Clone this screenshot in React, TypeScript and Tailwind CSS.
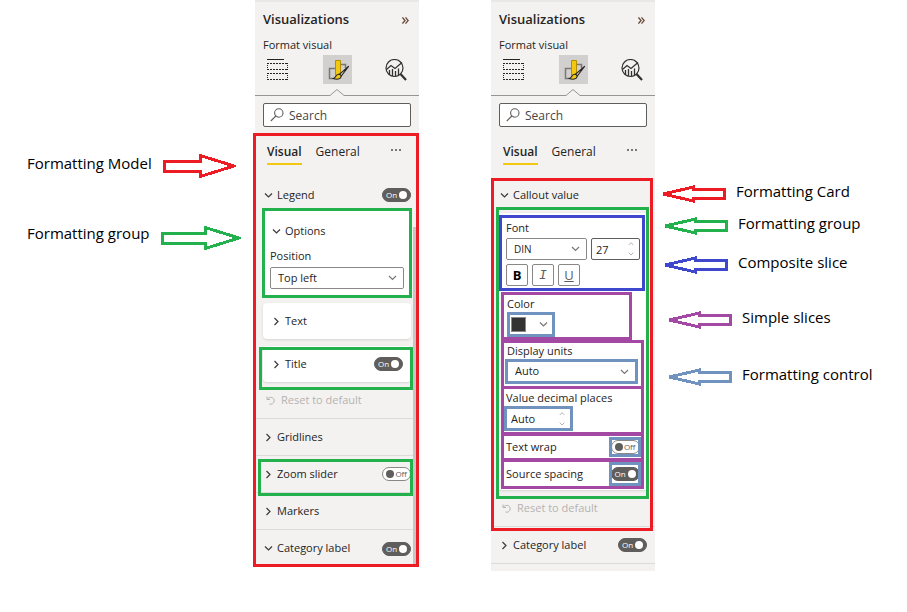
import React, { useId, useState } from "react";
import type { ReactNode } from "react";

type Dir = "down" | "right" | "up";

function Chevron({ dir = "down", size = "size-[9px]", className = "" }: { dir?: Dir; size?: string; className?: string }) {
  const d = { down: "M1 2.5 4.5 6 8 2.5", right: "M2.5 1 6 4.5 2.5 8", up: "M1 6 4.5 2.5 8 6" }[dir];
  return (
    <svg viewBox="0 0 9 9" fill="none" stroke="currentColor" className={`shrink-0 ${size} ${className}`} aria-hidden="true">
      <path d={d} strokeWidth="1.2" />
    </svg>
  );
}

function Frame({ className }: { className: string }) {
  return <div aria-hidden="true" className={`pointer-events-none absolute border-[3px] ${className}`} />;
}

function Toggle({ label, initial }: { label: string; initial: boolean }) {
  const [on, setOn] = useState(initial);
  return (
    <label className="relative block h-[14px] w-[29px] shrink-0">
      <input
        type="checkbox"
        role="switch"
        aria-label={label}
        checked={on}
        onChange={() => setOn(!on)}
        className="block h-full w-full appearance-none rounded-full border border-[#8a8886] bg-white checked:border-[#605e5c] checked:bg-[#605e5c]"
      />
      <span
        className={`pointer-events-none absolute inset-0 flex items-center justify-between px-1 text-[8px] leading-none ${
          on ? "text-white" : "flex-row-reverse text-[#605e5c]"
        }`}
      >
        {on ? "On" : "Off"}
        <span className={`size-2 rounded-full ${on ? "bg-white" : "bg-[#605e5c]"}`} />
      </span>
    </label>
  );
}

function Select({ id, value, className = "", text = "text-[11px]" }: { id: string; value: string; className?: string; text?: string }) {
  return (
    <div className={`relative ${className}`}>
      <select id={id} defaultValue={value} className={`block h-full w-full appearance-none rounded-[inherit] bg-white pr-5 pl-[7px] text-[#252423] ${text}`}>
        <option>{value}</option>
      </select>
      <Chevron className="pointer-events-none absolute top-1/2 right-[6px] -translate-y-1/2 text-[#797775]" />
    </div>
  );
}

function NumberBox({ id, label, value, className }: { id: string; label?: string; value: string; className: string }) {
  return (
    <div className={`flex items-center bg-white ${className}`}>
      <input id={id} aria-label={label} defaultValue={value} className="h-full w-0 flex-1 bg-transparent pl-1 text-[11px] text-[#252423]" />
      <span className="flex flex-col gap-1 pr-[5px] text-[#a19f9d]">
        <Chevron dir="up" size="size-[6px]" />
        <Chevron size="size-[6px]" />
      </span>
    </div>
  );
}

function BuildIcon() {
  return (
    <svg viewBox="0 0 22 22" className="size-[22px]" fill="none" stroke="#252423" shapeRendering="crispEdges" aria-hidden="true">
      <path d="M0 .5H17" />
      <path d="M0 4.5H21M0 10.5H21M0 14.5H21M0 20.5H21" strokeDasharray="2 1" />
      <path d="M.5 4V11M20.500 4V11M.5 14V21M20.500 14V21" strokeDasharray="1 1" />
    </svg>
  );
}

function FormatIcon() {
  return (
    <svg viewBox="0 0 29 29" className="size-[29px]" fill="none" aria-hidden="true">
      <path d="M12 13.500H6.500V23.500H12M18 9.500h4.500V13" stroke="#797775" strokeWidth="1.500" />
      <path d="M12.500 5.500h5V20.500h-5z" fill="#f2c811" stroke="#b58e00" />
      <path d="M25.500 11.500 18.300 21l-2-1.600z" fill="#e1dfdd" stroke="#252423" strokeWidth="1.200" strokeLinejoin="round" />
      <path d="M15.500 19.300c1.700-.2 2.900 1 2.500 2.500-.7 2.400-4.200 3-7.500 1.700 2.300-.4 2-3.900 5-4.200z" fill="#f2c811" stroke="#252423" strokeWidth="1.100" />
    </svg>
  );
}

function AnalyticsIcon() {
  return (
    <svg viewBox="0 0 22 22" className="size-[22px]" fill="none" stroke="#323130" aria-hidden="true">
      <circle cx="9.500" cy="9" r="8.500" strokeWidth="1.200" />
      <path d="m1.500 10.500 4.500-4 4 3 7-6" strokeWidth="1.200" />
      <path d="M4.500 11v4.500M7.500 10v7M10.500 12v5.500M13.500 9.500V16" strokeWidth="1.300" />
      <path d="m15.500 15 5.500 6" strokeWidth="2.200" />
    </svg>
  );
}

function PanelHeader() {
  return (
    <header>
      <div className="flex h-9 items-center justify-between pr-[10px] pl-2">
        <h2 className="text-[13px] font-semibold">Visualizations</h2>
        <button type="button" aria-label="Collapse pane" className="text-[#6b4a3a]">
          <svg viewBox="0 0 8 8" className="size-[7px]" fill="none" stroke="currentColor" strokeWidth="1.500" aria-hidden="true">
            <path d="m.5.500 3 3.500-3 3.500M4 .500l3 3.500-3 3.500" />
          </svg>
        </button>
      </div>
      <p className="pl-2 text-[11px] leading-[14px]">Format visual</p>
      <div className="mt-[3px] flex items-center justify-between px-3">
        <button type="button" aria-label="Build visual"><BuildIcon /></button>
        <button type="button" aria-label="Format visual" className="bg-[#d2d0ce]"><FormatIcon /></button>
        <button type="button" aria-label="Analytics"><AnalyticsIcon /></button>
      </div>
      <div className="mt-[5px] flex items-end">
        <span className="h-px flex-1 bg-[#979593]" />
        <svg viewBox="0 0 14 7" className="h-[7px] w-[14px]" fill="none" stroke="#979593" aria-hidden="true">
          <path d="M0 6.500 7 .500l7 6" />
        </svg>
        <span className="h-px flex-1 bg-[#979593]" />
      </div>
      <label className="mx-2 mt-[7px] flex h-6 items-center gap-[5px] rounded-[2px] border border-[#605e5c] bg-white pl-[6px]">
        <svg viewBox="0 0 14 14" className="size-[14px] shrink-0" fill="none" stroke="#605e5c" strokeWidth="1.100" aria-hidden="true">
          <circle cx="8.800" cy="5" r="4.200" />
          <path d="M5.800 8 .8 13" />
        </svg>
        <input type="text" aria-label="Search" placeholder="Search" className="h-full w-full min-w-0 bg-transparent pt-px text-[12px] placeholder:text-[#484644]" />
      </label>
    </header>
  );
}

function Tabs() {
  return (
    <div role="tablist" className="flex h-6 pr-[18px] pl-3 text-[12px]">
      <button type="button" role="tab" aria-selected="true" className="border-b-2 border-[#f2c811] font-semibold">Visual</button>
      <button type="button" role="tab" aria-selected="false" className="ml-[14px] border-b-2 border-transparent">General</button>
      <button type="button" aria-label="More options" className="ml-auto pb-[6px]">
        <svg viewBox="0 0 10 2" className="h-[2px] w-[10px]" fill="#797775" aria-hidden="true">
          <path d="M0 0h2v2H0zM4 0h2v2H4zM8 0h2v2H8z" />
        </svg>
      </button>
    </div>
  );
}

function CardRow({ title, open = false, toggle, className = "", children }: { title: string; open?: boolean; toggle?: boolean; className?: string; children?: ReactNode }) {
  return (
    <div className={`relative flex items-center justify-between pr-2 pl-[9px] ${className}`}>
      <button type="button" aria-expanded={open} className="flex items-center gap-1">
        <Chevron dir={open ? "down" : "right"} className="text-[#3b3a39]" />
        {title}
      </button>
      {toggle !== undefined && <Toggle label={title} initial={toggle} />}
      {children}
    </div>
  );
}

function Reset() {
  return (
    <div className="h-[37px] border-b border-[#dddbd9] pl-[11px]">
      <button type="button" className="flex h-full items-center gap-[6px] text-[#b5b3b1]">
        <svg viewBox="0 0 9 9" className="size-[9px]" fill="none" stroke="currentColor" aria-hidden="true">
          <path d="M1 .500V3.500H4M1.200 3.300C4-.2 8.500 1.500 8.200 5 8 7.500 5.500 8.800 3.500 8" />
        </svg>
        Reset to default
      </button>
    </div>
  );
}

const divided = "h-[37px] border-b border-[#dddbd9]";
const panel = "border-t-2 border-[#e9e8e7] bg-[#f3f2f1] text-[11px] text-[#252423]";

function LegendPanel() {
  const position = useId();
  return (
    <section className={panel}>
      <PanelHeader />
      <div className="relative mt-[6px] pt-2">
        <Tabs />
        <CardRow title="Legend" open toggle={true} className="mt-[17px] h-[26px]" />
        <div className="relative mx-2 bg-white px-[7px] pt-[14px] pb-[9px]">
          <button type="button" aria-expanded="true" className="flex h-[18px] items-center gap-1 pl-[2px]">
            <Chevron className="text-[#3b3a39]" />
            Options
          </button>
          <label htmlFor={position} className="mt-2 block leading-4">Position</label>
          <Select id={position} value="Top left" className="mt-[3px] h-[22px] rounded-[2px] border border-[#8a8886]" />
          <Frame className="inset-y-0 -inset-x-px border-[#22b14c]" />
        </div>
        <CardRow title="Text" className="mx-2 mt-[5px] h-9 rounded-sm bg-white shadow-sm" />
        <CardRow title="Title" toggle={true} className="mx-2 mt-[7px] h-9 rounded-sm bg-white shadow-sm">
          <Frame className="top-px -right-[2px] -bottom-2 -left-1 border-[#22b14c]" />
        </CardRow>
        <Reset />
        <CardRow title="Gridlines" className={divided} />
        <CardRow title="Zoom slider" toggle={false} className={divided}>
          <Frame className="top-[3px] right-[6px] -bottom-1 left-[3px] border-[#22b14c]" />
        </CardRow>
        <CardRow title="Markers" className={divided} />
        <CardRow title="Category label" open toggle={true} className="h-[37px]" />
        <div aria-hidden="true" className="absolute top-[94px] right-[3px] bottom-[3px] w-[3px] bg-[#c8c6c4]" />
        <Frame className="inset-y-0 right-0 -left-[2px] border-[#ed1c24]" />
      </div>
    </section>
  );
}

const slice = "ml-[2px] w-[143px] border-[3px] border-[#a349a4]";
const control = "border-[3px] border-[#7092be]";
const styleButton = "flex size-[22px] items-center justify-center rounded-[2px] border border-[#8a8886] text-[13px] leading-none";

function CalloutPanel() {
  const id = useId();
  return (
    <section className={`${panel} pb-[7px]`}>
      <PanelHeader />
      <div className="mt-[14px]"><Tabs /></div>
      <div className="relative mt-[13px] pt-1">
        <CardRow title="Callout value" open className="h-[26px]" />
        <div className="relative mx-2 mt-[5px] bg-white pt-[2px] pb-px shadow-sm">
          <div className="mr-[2px] border-[3px] border-[#3f48cc] pt-[2px] pr-[2px] pb-[2px] pl-1">
            <label htmlFor={`${id}font`} className="block leading-4">Font</label>
            <div className="mt-[2px] flex h-[22px] gap-1">
              <Select id={`${id}font`} value="DIN" text="text-[10px]" className="flex-1 rounded-[2px] border border-[#8a8886]" />
              <NumberBox id={`${id}size`} label="Font size" value="27" className="w-[49px] rounded-[2px] border border-[#605e5c]" />
            </div>
            <div className="mt-1 flex gap-1">
              <button type="button" aria-label="Bold" className={`${styleButton} font-bold text-black`}>B</button>
              <button type="button" aria-label="Italic" className={`${styleButton} font-['Liberation_Mono',monospace] text-[#605e5c] italic`}>I</button>
              <button type="button" aria-label="Underline" className={`${styleButton} text-[#605e5c] underline`}>U</button>
            </div>
          </div>
          <div className="mt-px ml-[2px] w-[131px] border-[3px] border-[#a349a4] pt-px pl-[3px]">
            <span className="block leading-4">Color</span>
            <button type="button" aria-label="Color" className={`${control} flex h-[25px] w-12 items-center justify-between bg-white pr-1 pl-px`}>
              <span className="size-[15px] border border-[#8a8886] bg-[#333333]" />
              <Chevron className="text-[#797775]" />
            </button>
          </div>
          <div className={`${slice} pr-[3px] pb-[2px] pl-px`}>
            <label htmlFor={`${id}units`} className="block pl-[2px] leading-4">Display units</label>
            <Select id={`${id}units`} value="Auto" className={`${control} h-[25px]`} />
          </div>
          <div className={`${slice} -mt-[3px] py-px`}>
            <label htmlFor={`${id}places`} className="block pl-[2px] leading-4">Value decimal places</label>
            <NumberBox id={`${id}places`} value="Auto" className={`${control} h-[25px] w-[69px]`} />
          </div>
          <div className={`${slice} -mt-[2px] flex h-7 items-center justify-between pl-[2px]`}>
            Text wrap
            <div className={`${control} flex h-5 w-8 items-center justify-center overflow-hidden`}>
              <Toggle label="Text wrap" initial={false} />
            </div>
          </div>
          <div className={`${slice} -mt-[2px] flex h-[30px] items-center justify-between pl-[2px]`}>
            Source spacing
            <div className={`${control} flex h-6 w-8 items-center justify-center overflow-hidden`}>
              <Toggle label="Source spacing" initial={true} />
            </div>
          </div>
          <Frame className="-top-[6px] -right-[2px] -bottom-[9px] -left-[3px] border-[#22b14c]" />
        </div>
        <Reset />
        <Frame className="top-0 right-[2px] -bottom-1 left-0 border-[#ed1c24]" />
      </div>
      <CardRow title="Category label" toggle={true} className={divided} />
    </section>
  );
}

function RightArrow({ length, className }: { length: number; className: string }) {
  const neck = length - 36;
  return (
    <svg width={length} height="26" className={`shrink-0 ${className}`} fill="none" stroke="currentColor" strokeWidth="3" shapeRendering="crispEdges" aria-hidden="true">
      <path d={`M1.500 8H${neck}V2.500L${length - 2} 13 ${neck} 23.500V18H1.500z`} />
    </svg>
  );
}

function LeftArrow({ className }: { className: string }) {
  return (
    <svg viewBox="0 0 65 18" className={`h-[18px] w-[65px] shrink-0 ${className}`} fill="none" stroke="currentColor" strokeWidth="3" shapeRendering="crispEdges" aria-hidden="true">
      <path d="M63.500 4.500h-31V2L2 9l30.500 7v-2.500h31z" />
    </svg>
  );
}

const notes = [
  { text: "Formatting Card", row: "mt-[181px] pl-[6px]", color: "text-[#ed1c24]" },
  { text: "Formatting group", row: "mt-[10px] pl-2", color: "text-[#22b14c]" },
  { text: "Composite slice", row: "mt-[17px] pl-2", color: "text-[#3f48cc]" },
  { text: "Simple slices", row: "mt-[33px] pl-3", color: "text-[#a349a4]" },
  { text: "Formatting control", row: "mt-[35px] pl-3", color: "text-[#7092be]" },
];

export default function App() {
  return (
    <main className="grid min-h-screen grid-cols-[255fr_164px_72fr_164px_252fr] items-start bg-white font-['Open_Sans','Noto_Sans',sans-serif]">
      <ul className="pl-[27px] text-[15px] leading-5 text-black">
        <li className="mt-[153px] flex h-[26px] items-end">
          <span className="w-[136px] self-start whitespace-nowrap">Formatting Model</span>
          <RightArrow length={73} className="text-[#ed1c24]" />
        </li>
        <li className="mt-11 flex h-7 items-end">
          <span className="w-[134px] self-start whitespace-nowrap">Formatting group</span>
          <RightArrow length={80} className="text-[#22b14c]" />
        </li>
      </ul>
      <LegendPanel />
      <div />
      <CalloutPanel />
      <ul className="text-[15px] leading-5 whitespace-nowrap text-black">
        {notes.map((n) => (
          <li key={n.text} className={`flex h-[22px] items-end gap-[10px] ${n.row}`}>
            <LeftArrow className={n.color} />
            <span className="self-start">{n.text}</span>
          </li>
        ))}
      </ul>
    </main>
  );
}
